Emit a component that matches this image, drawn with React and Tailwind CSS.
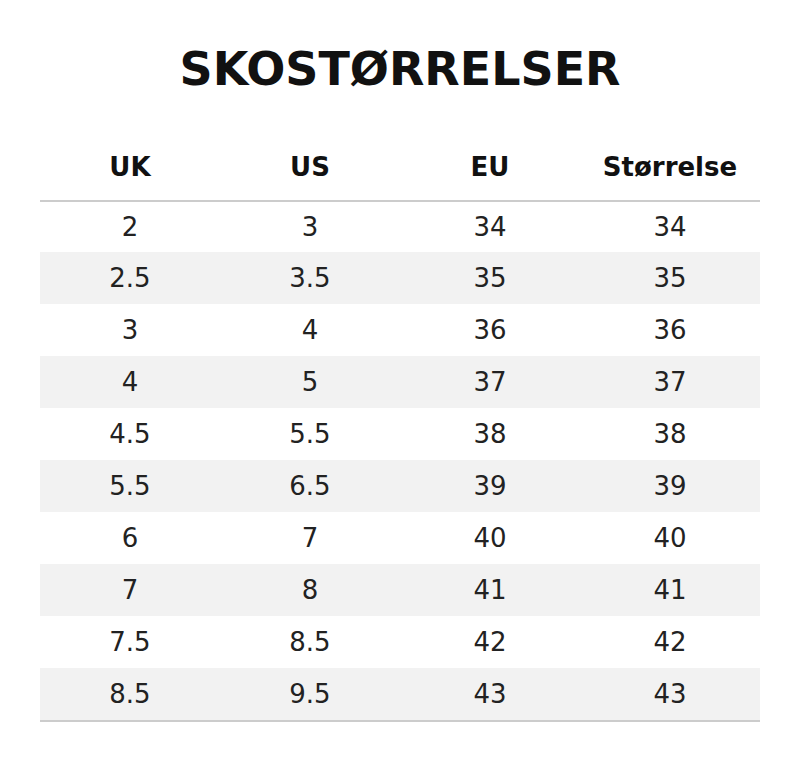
import React from 'react';

const sizes = [
  ['2', '3', '34', '34'],
  ['2.5', '3.5', '35', '35'],
  ['3', '4', '36', '36'],
  ['4', '5', '37', '37'],
  ['4.5', '5.5', '38', '38'],
  ['5.5', '6.5', '39', '39'],
  ['6', '7', '40', '40'],
  ['7', '8', '41', '41'],
  ['7.5', '8.5', '42', '42'],
  ['8.5', '9.5', '43', '43'],
];

const headers = ['UK', 'US', 'EU', 'Størrelse'];

export default function App() {
  return (
    <div className="min-h-screen bg-white font-['DejaVu_Sans',sans-serif] text-[#222]">
      {/* Title */}
      <h1 className="pt-[43px] text-center text-[46px] leading-[52px] font-bold text-[#111]">
        SKOSTØRRELSER
      </h1>

      {/* Size table */}
      <div className="w-[720px] mx-auto">
        <div className="grid grid-cols-4 pt-[57px] pb-[18px] border-b-2 border-[#cccccc]">
          {headers.map((h) => (
            <div key={h} className="text-center text-[26px] leading-[30px] font-bold text-[#111]">
              {h}
            </div>
          ))}
        </div>

        <div className="border-b-2 border-[#cccccc]">
          {sizes.map((row, i) => (
            <div
              key={i}
              className={`grid grid-cols-4 items-center ${i === 0 ? 'h-[50px]' : 'h-[52px]'} ${i % 2 === 1 ? 'bg-[#f2f2f2]' : 'bg-white'}`}
            >
              {row.map((v, j) => (
                <div key={j} className="text-center text-[26px] leading-[30px]">
                  {v}
                </div>
              ))}
            </div>
          ))}
        </div>
      </div>
    </div>
  );
}
